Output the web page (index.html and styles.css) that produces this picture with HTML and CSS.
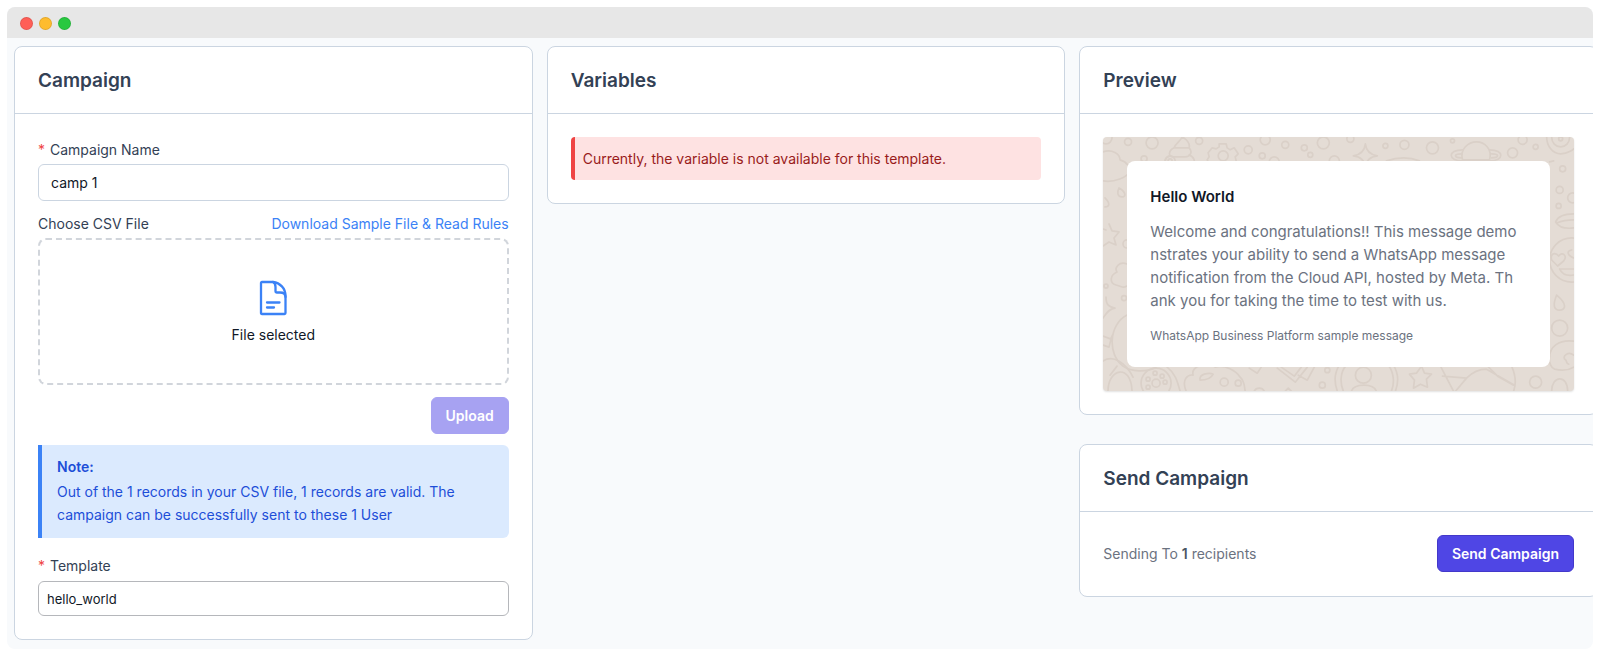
FILE: index.html
```html
<!DOCTYPE html>
<html lang="en">
<head>
<meta charset="utf-8">
<title>Campaign</title>
<link rel="stylesheet" href="styles.css">
</head>
<body>
<div class="window">
  <div class="titlebar">
    <span class="dot dot-red"></span><span class="dot dot-amber"></span><span class="dot dot-green"></span>
  </div>
  <main class="columns">
    <section class="card">
      <h2 class="card-title">Campaign</h2>
      <form class="card-body">
        <label class="label" for="name"><span class="required">*</span> Campaign Name</label>
        <input class="field" id="name" type="text" value="camp 1">
        <div class="file-head">
          <span class="label" id="csv-label">Choose CSV File</span>
          <a class="link" href="#">Download Sample File &amp; Read Rules</a>
        </div>
        <button class="dropzone" type="button" aria-describedby="csv-label">
          <svg class="file-icon" viewBox="0 0 28 36" fill="none" stroke="currentColor" stroke-width="2.300" stroke-linecap="round" stroke-linejoin="round">
            <path d="M3 2H14C21 3 26.500 8 26.500 16V33Q26.500 34 25.500 34H3Q2 34 2 33V3Q2 2 3 2Z"/>
            <path d="M14 2C16 3 16.500 5 16.500 7V11Q16.500 12.500 18 12.500H21C24 12.500 26.500 14 26.500 17"/>
            <path d="M8 22.500H20.500M8 27.500H15"/>
          </svg>
          <span>File selected</span>
        </button>
        <button class="button upload" type="button" disabled>Upload</button>
        <div class="note">
          <strong class="note-title">Note:</strong>
          <p class="note-text">Out of the 1 records in your CSV file, 1 records are valid. The campaign can be successfully sent to these 1 User</p>
        </div>
        <label class="label" for="template"><span class="required">*</span> Template</label>
        <select class="field template" id="template"><option>hello_world</option></select>
      </form>
    </section>

    <section class="card">
      <h2 class="card-title">Variables</h2>
      <div class="card-body">
        <p class="alert">Currently, the variable is not available for this template.</p>
      </div>
    </section>

    <div class="stack">
      <section class="card">
        <h2 class="card-title">Preview</h2>
        <div class="card-body">
          <div class="chat">
            <svg class="doodles" viewBox="0 0 470 254" preserveAspectRatio="xMidYMid slice" fill="none" stroke="#dad0c8" stroke-width="1.700" stroke-linecap="round" stroke-linejoin="round">
              <circle cx="3" cy="1" r="6"/><circle cx="25" cy="5" r="3.500"/><circle cx="49" cy="6" r="6"/><circle cx="96" cy="4" r="3.500"/>
              <circle cx="41" cy="22" r="3"/><circle cx="145" cy="13" r="4"/><circle cx="159" cy="19" r="3"/><circle cx="162" cy="3" r="5"/>
              <circle cx="182" cy="8" r="3.500"/><circle cx="201" cy="11" r="3"/><circle cx="207" cy="18" r="2.500"/><circle cx="220" cy="6" r="6"/>
              <circle cx="247" cy="2" r="3.500"/><circle cx="282" cy="9" r="2.500"/><circle cx="301" cy="8" r="4.500"/><circle cx="329" cy="11" r="6"/>
              <circle cx="349" cy="4" r="2"/><circle cx="409" cy="16" r="5"/><circle cx="419" cy="3" r="4.500"/><circle cx="432" cy="10" r="2.500"/>
              <circle cx="171" cy="25" r="5"/><circle cx="231" cy="24" r="5"/>
              <path d="M0 15c9-3 17 2 17 8c7 2 10 7 9 12s-15 11-26 9"/>
              <path d="M71 11c2-5 7-7 8-11c5 3 8 7 7 11M71 11h15c4 4 1 9-4 9H70c-5 0-5-6 1-9ZM67 19c-6 2-6 7-2 10h24c4-4 2-9-3-11"/>
              <circle cx="67" cy="24" r="5"/><circle cx="67" cy="24" r="2"/>
              <path d="M116 7h7l1 4 3 2 4-2 4 6-3 3 1 4-4 5-4-1-4 3h-6l-3-3-4 1-4-6 2-3-1-4 4-5 4 1 3-2Z"/><circle cx="120" cy="19" r="5"/>
              <path d="M262 7q1 10 12 12q-11 1-12 12q-1-11-12-12q11-2 12-12Z"/>
              <path d="M283 24q18-6 33 0M359 23c-3-11 6-18 14-18s16 7 13 18Z"/>
              <path d="M359 13c-15 0-15 11 0 11h27c15 0 15-11 0-11M358 17c-8 0-8 4 0 4M388 17c8 0 8 4 0 4"/>
              <path d="M443 0c0 9 6 17 14 17s13-5 13-5M448 0c0 6 4 10 9 10s9-4 9-10"/><circle cx="457" cy="2" r="2"/>
              <path d="M16 51c6 3 8 9 3 9s-5-5-3-9Z"/><path d="M2 61c5 5 5 9 0 9"/>
              <path d="M6 87l3 7 7 1-5 6 2 7-7-3-6 4M0 92l3 1"/><circle cx="24" cy="107" r="4"/>
              <path d="M24 127c-8-3-13 4-10 8c-7 3-8 11-1 13s7 3 11 1"/><circle cx="3" cy="149" r="2"/><circle cx="21" cy="161" r="2.500"/>
              <path d="M3 160c0 8 3 10 9 11c-7 1-9 6-12 10"/>
              <path d="M24 178C6 187 4 217 20 229c8 6 24 6 33 1M0 199l8 3-2 8-6-2M8 201l2-4"/>
              <path d="M0 224c10-7 23 2 30 16M5 254c0-23 23-28 24 0M14 229l-7 9"/>
              <circle cx="53" cy="246" r="15"/><circle cx="53" cy="246" r="4"/><circle cx="52" cy="236" r="2"/><circle cx="59" cy="239" r="2"/><circle cx="62" cy="245" r="2"/><circle cx="45" cy="242" r="2"/><circle cx="45" cy="250" r="2"/>
              <path d="M64 230c8 6 10 13 13 24M83 254c-5-12 2-17 7-16c-3-10 16-14 22-8c10-3 21 4 25 10c5 5 4 10 5 14"/>
              <path d="M97 243c-2-6 9-8 13-6c-2 4-7 6-13 6Z"/><circle cx="121" cy="245" r="4"/><circle cx="135" cy="246" r="3"/>
              <path d="M146 231l8 5 4-6M174 231l18 14 12-15M178 230l13 9 7-9M195 238l9 5 7-13"/>
              <circle cx="224" cy="233" r="2.500"/><circle cx="219" cy="248" r="3"/><path d="M151 254c2-4 8-4 10 0M182 254l3-3 3 3"/>
              <circle cx="260" cy="238" r="8"/><path d="M236 228c-5 8-5 18-2 26M243 228c-7 8-6 19-3 26M285 228c6 8 6 19 3 26M290 228c5 8 5 18 2 26M248 254c3-8 22-8 25 0"/>
              <path d="M318 229l3 7 7 1-5 5 1 8-7-3-7 4 1-8-5-6 7-1Z"/>
              <path d="M337 229l13 25M339 239l24 2c8-8 16-9 20-9l28 16M363 241l-11 13M385 230l9 9 16 9M408 229c4 9 5 17 2 25"/>
              <circle cx="432" cy="245" r="6"/><path d="M448 254c0-16 16-17 16 0"/>
              <circle cx="459" cy="32" r="3"/><circle cx="456" cy="53" r="3.500"/><circle cx="455" cy="69" r="2.500"/><circle cx="469" cy="61" r="5"/>
              <path d="M446 25l4-1M470 77c-9 0-16 3-18 8c3 5 10 7 18 6M453 86c5-2 11-3 17-3"/>
              <circle cx="468" cy="123" r="22"/><path d="M448 123c-2-7 4-8 7-4c4-5 9 0 5 5l-6 5ZM470 121c-7-3-7-7-2-8M456 132h14M456 132c3 6 8 7 14 6"/>
              <path d="M453 158c11 9 9 15 3 15s-7-5-3-15Z"/><circle cx="456" cy="191" r="8"/>
              <path d="M446 220c0-10 9-18 24-16M446 220c-1 6 2 11 5 12c8 2 14 1 19-2M470 218c-5-4-11 0-9 4c3 1 1 5 4 5"/>
            </svg>
            <article class="bubble">
              <h3 class="bubble-title">Hello World</h3>
              <p class="bubble-text">Welcome and congratulations!! This message demo<br>nstrates your ability to send a WhatsApp message<br>notification from the Cloud API, hosted by Meta. Th<br>ank you for taking the time to test with us.</p>
              <p class="bubble-footer">WhatsApp Business Platform sample message</p>
            </article>
          </div>
        </div>
      </section>
      <section class="card">
        <h2 class="card-title">Send Campaign</h2>
        <div class="card-body send">
          <p class="recipients">Sending To <strong>1</strong> recipients</p>
          <button class="button" type="button">Send Campaign</button>
        </div>
      </section>
    </div>
  </main>
</div>
</body>
</html>
```
FILE: styles.css
```css
* { box-sizing: border-box; margin: 0; }

body {
  padding: 7px;
  background: #fff;
  color: #111827;
  font: 14px/20px Inter, "Liberation Sans", sans-serif;
}

button, input, select { font: inherit; color: inherit; }

.window {
  overflow: hidden;
  border-radius: 8px;
  background: #f8fafc;
}

.titlebar {
  display: flex;
  align-items: center;
  gap: 6px;
  height: 31px;
  padding: 1px 13px 0;
  background: #e7e7e7;
}

.dot { width: 13px; height: 13px; border: 1px solid #0000001a; border-radius: 50%; }
.dot-red { background: #ff5f57; }
.dot-amber { background: #febc2e; }
.dot-green { background: #28c840; }

.columns {
  display: grid;
  grid-template-columns: repeat(3, minmax(0, 1fr));
  align-items: start;
  gap: 14px;
  margin-right: -5px;
  padding: 8px 0 9px 7px;
}

.stack { display: grid; gap: 29px; }

.card {
  border: 1px solid #cbd5e1;
  border-radius: 8px;
  background: #fff;
}

.card-title {
  padding: 19px 23px 18px;
  border-bottom: 1px solid #cbd5e1;
  color: #334155;
  font-size: 19px;
  font-weight: 600;
  line-height: 29px;
}

.card-body { padding: 23px; }
form.card-body { display: flex; flex-direction: column; padding-top: 26px; }

.label { color: #334155; }
.required { margin-right: 1px; color: #ef4444; }

.field {
  width: 100%;
  height: 37px;
  margin-top: 4px;
  padding: 0 12px;
  border: 1px solid #cbd5e1;
  border-radius: 6px;
  background: #fff;
}

.template {
  height: 35px;
  margin-top: 5px;
  padding: 0 8px;
  border-color: #b5b7bb;
  appearance: none;
  font-size: 13px;
}

.file-head { display: flex; justify-content: space-between; margin: 13px 0 4px; }
.link { color: #3b82f6; text-decoration: none; }

.dropzone {
  display: flex;
  flex-direction: column;
  align-items: center;
  justify-content: center;
  gap: 9px;
  min-height: 147px;
  padding: 2px 0 0;
  border: 2px dashed #d1d5db;
  border-radius: 8px;
  background: #fff;
}

.file-icon { width: 28px; height: 36px; color: #3b82f6; }

.button {
  height: 37px;
  padding: 0 14px;
  border: 1px solid #4338ca;
  border-radius: 6px;
  background: #4f46e5;
  color: #fff;
  font-weight: 600;
}

.upload { align-self: flex-end; margin-top: 12px; border-color: #a7a2f2; background: #a7a2f2; }

.note {
  margin: 11px 0 18px;
  padding: 12px 16px 12px 15px;
  border-left: 4px solid #3b82f6;
  border-radius: 0 6px 6px 0;
  background: #dbeafe;
  color: #1d4ed8;
}

.note-title { display: block; font-weight: 600; }
.note-text { margin-top: 3px; line-height: 23px; }

.alert {
  padding: 12px 8px 11px;
  border-left: 4px solid #ef4444;
  border-radius: 4px;
  background: #fee2e2;
  color: #991b1b;
}

.chat {
  position: relative;
  padding: 24px;
  overflow: hidden;
  border-radius: 4px;
  background: #e4dcd5;
  box-shadow: 0 1px 2px #0000001f;
}

.doodles { position: absolute; inset: 0; width: 100%; height: 100%; }

.bubble {
  position: relative;
  padding: 24px 23px 21px;
  border-radius: 8px;
  background: #fff;
}

.bubble-title { color: #111827; font-size: 15px; font-weight: 600; line-height: 23px; }
.bubble-text { margin: 12px 0 14px; color: #6b7280; font-size: 15px; line-height: 23px; }
.bubble-footer { color: #6b7280; font-size: 12px; line-height: 20px; }

.send { display: flex; align-items: center; justify-content: space-between; padding-bottom: 24px; }
.recipients { color: #6b7280; }
.recipients strong { color: #4b5563; font-weight: 600; }
```
